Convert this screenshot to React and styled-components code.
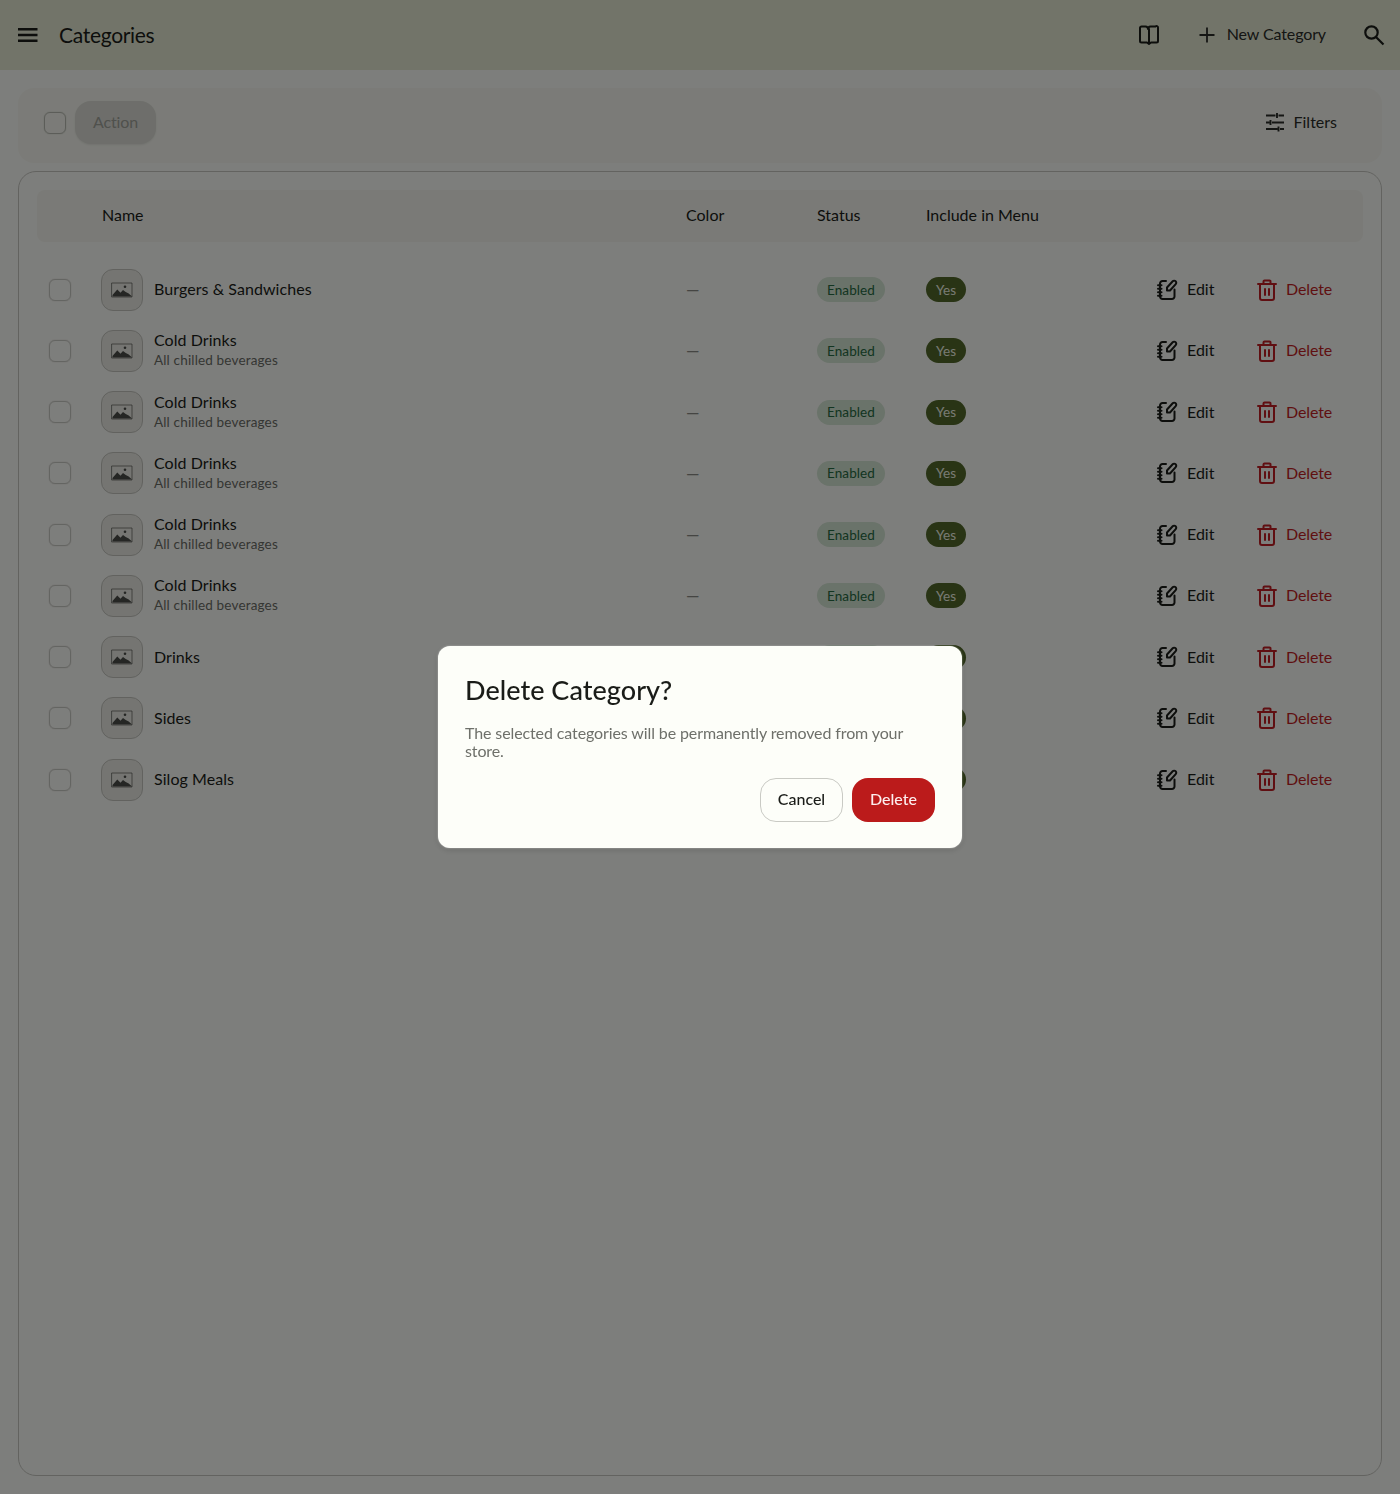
import React from "react";
import styled, { createGlobalStyle } from "styled-components";

const Global = createGlobalStyle`
  html, body { margin: 0; padding: 0; background: #fbfcf8; }
  * { box-sizing: border-box; }
  body { font-family: "Lato", "Noto Sans", sans-serif; color: #1a1c18; }
`;
const Page = styled.div`
  height: 1494px;
  display: flex;
  flex-direction: column;
  background: #fbfcf8;
`;
const AppBar = styled.header`
  height: 70px;
  flex: none;
  display: flex;
  align-items: center;
  padding: 0 14px 0 16px;
  background: #e4e9d3;
`;
const BarIcon = styled.svg`
  display: block;
  flex: none;
  fill: none;
  stroke: currentColor;
  stroke-linecap: round;
  stroke-linejoin: round;
`;
const Title = styled.h1`
  margin: 0 0 2px 19px;
  font-size: 21px;
  font-weight: 400;
  letter-spacing: -0.3px;
  flex: 1;
`;
const BookWrap = styled.div`
  margin-right: 35px;
`;
const Label = styled.span`
  display: block;
  margin-bottom: ${p => p.$lift || 2}px;
`;
const NewButton = styled.div`
  display: flex;
  align-items: center;
  gap: 8px;
  font-size: 16px;
  letter-spacing: -0.12px;
  margin-right: 36px;
  color: #2a2c28;
`;
const Content = styled.main`
  flex: 1;
  display: flex;
  flex-direction: column;
  padding: 18px;
  gap: 8px;
`;
const Toolbar = styled.section`
  height: 75px;
  flex: none;
  display: flex;
  align-items: center;
  padding: 0 45px 6px 26px;
  border-radius: 16px;
  background: #f6f7f0;
`;
const Check = styled.span`
  display: block;
  flex: none;
  width: 22px;
  height: 22px;
  border-radius: 6px;
  border: 1.5px solid ${p => (p.$faint ? "#b9bbb2" : "#c9cac4")};
  background: transparent;
  box-shadow: 0 0 1px rgba(0, 0, 0, 0.3);
`;
const ActionButton = styled.div`
  margin-left: 9px;
  height: 43px;
  width: 81px;
  border-radius: 16px;
  background: #dcddd6;
  color: #a0a29a;
  display: flex;
  align-items: center;
  justify-content: center;
  font-size: 16px;
  letter-spacing: -0.1px;
  box-shadow: 0 1px 2px rgba(0, 0, 0, 0.08);
`;
const Spacer = styled.div`
  flex: 1;
`;
const Filters = styled.div`
  display: flex;
  align-items: center;
  gap: 7px;
  font-size: 16px;
  color: #2a2c28;
`;
const TableCard = styled.section`
  flex: 1;
  border: 1.5px solid #c6c7c1;
  border-radius: 18px;
  padding: 18px;
`;
const columns = `64px 585px 131px 109px 229px 100px 1fr`;
const HeadRow = styled.div`
  height: 52px;
  display: grid;
  grid-template-columns: ${columns};
  align-items: center;
  border-radius: 8px;
  background: #f4f5ee;
  font-size: 16px;
  margin-bottom: 17px;
`;
const HeadCell = styled.span`
  display: block;
  margin-bottom: 3px;
  padding-left: ${p => (p.$inset ? 1 : 0)}px;
`;
const Row = styled.div`
  height: 61.25px;
  display: grid;
  grid-template-columns: ${columns};
  align-items: center;
`;
const CheckCell = styled.div`
  padding-left: 12px;
`;
const NameCell = styled.div`
  display: flex;
  align-items: center;
  gap: 11px;
`;
const Thumb = styled.div`
  width: 42px;
  height: 42px;
  border-radius: 12px;
  background: #eaebe4;
  border: 1px solid #c4c5bf;
  display: flex;
  align-items: center;
  justify-content: center;
  flex: none;
  color: #4a4c48;
`;
const NameText = styled.div`
  display: flex;
  flex-direction: column;
  margin-bottom: 1px;
`;
const Name = styled.div`
  font-size: 16px;
  line-height: 20px;
  letter-spacing: 0.06px;
`;
const Sub = styled.div`
  font-size: 13.5px;
  line-height: 20px;
  letter-spacing: 0.16px;
  color: #6a6c66;
`;
const Dash = styled.div`
  color: #8a8b86;
  font-size: 17px;
`;
const Pill = styled.span`
  display: inline-flex;
  align-items: center;
  height: 25px;
  padding: 0 10px;
  border-radius: 13px;
  font-size: 13.5px;
  letter-spacing: 0.1px;
  background: ${p => (p.$dark ? "#52692a" : "#d4e6d4")};
  color: ${p => (p.$dark ? "#f2f6e8" : "#266a42")};
`;
const Action = styled.div`
  display: flex;
  align-items: center;
  gap: ${p => (p.$danger ? 7 : 8)}px;
  font-size: 16px;
  letter-spacing: ${p => (p.$danger ? -0.1 : 0)}px;
  color: ${p => (p.$danger ? "#c01f24" : "#1a1c18")};
`;
const Scrim = styled.div`
  position: fixed;
  inset: 0;
  background: rgba(0, 0, 0, 0.5);
  display: flex;
  align-items: center;
  justify-content: center;
`;
const Dialog = styled.div`
  width: 524px;
  height: 202px;
  background: #fdfef9;
  border-radius: 12px;
  padding: 27px;
  display: flex;
  flex-direction: column;
  box-shadow: 0 0 2px rgba(255, 255, 255, 0.5), 0 2px 6px rgba(0, 0, 0, 0.15);
`;
const DialogTitle = styled.h2`
  margin: 0;
  font-size: 27px;
  line-height: 34px;
  font-weight: 500;
  letter-spacing: 0.04px;
  color: #1a1c18;
`;
const DialogBody = styled.p`
  margin: 17px 0 0;
  font-size: 16px;
  line-height: 18px;
  letter-spacing: -0.11px;
  color: #6e706a;
`;
const DialogActions = styled.div`
  display: flex;
  justify-content: flex-end;
  gap: 9px;
  margin-top: 18px;
`;
const DialogButton = styled.div`
  width: 83px;
  height: 44px;
  border-radius: 16px;
  display: flex;
  align-items: center;
  justify-content: center;
  font-size: 16px;
  font-weight: 500;
  background: ${p => (p.$primary ? "#bb1b1b" : "transparent")};
  color: ${p => (p.$primary ? "#fdeeee" : "#1a1c18")};
  border: ${p => (p.$primary ? "none" : "1px solid #c9cac4")};
`;

const Menu = () => (
  <BarIcon width="24" height="24" viewBox="0 0 24 24" strokeWidth="2.4">
    <path strokeLinecap="butt" d="M2 6.200h19.500M2 12h19.500M2 17.800h19.500" />
  </BarIcon>
);
const Book = () => (
  <BarIcon width="24" height="24" viewBox="0 0 24 24" strokeWidth="2">
    <path d="M5.500 3.500H9.500A2.500 2.500 0 0 1 12 6a2.500 2.500 0 0 1 2.500-2.500h5A1.500 1.500 0 0 1 22 5v13a1.500 1.500 0 0 1-1.500 1.500H15L13 21l-2-1.500H5.500A1.500 1.500 0 0 1 4 18V5a1.500 1.500 0 0 1 1.500-1.500z" />
    <path d="M13 6v14" />
  </BarIcon>
);
const Plus = () => (
  <BarIcon width="24" height="24" viewBox="0 0 24 24" strokeWidth="1.8">
    <path strokeLinecap="butt" d="M12 4.500v15M4.500 12h15" />
  </BarIcon>
);
const Search = () => (
  <BarIcon width="24" height="24" viewBox="0 0 24 24" strokeWidth="2.2">
    <circle cx="9.500" cy="9.500" r="6.200" />
    <path strokeLinecap="butt" d="M14 14l7.500 7.500" />
  </BarIcon>
);
const Sliders = () => (
  <BarIcon width="24" height="24" viewBox="0 0 24 24" strokeWidth="1.9">
    <path strokeLinecap="butt" d="M3 4.500h9.500M14 2v5M15.500 4.500H21M3 11.500h3.500M7.500 9v5M9 11.500h12M3 18h11.500M15.500 15.500v5M17 18h4" />
  </BarIcon>
);
const Picture = () => (
  <BarIcon width="24" height="24" viewBox="0 0 24 24" strokeWidth="1">
    <rect x="2" y="5" width="20" height="14" strokeOpacity="0.65" />
    <path fill="currentColor" stroke="none" d="M2.500 18.500v-1.500l4.800-5.500 3.200 3.200 2.500-2.700 2.700 2 3 1.500 3.300 3z" />
    <circle cx="15" cy="8.800" r="1.300" fill="currentColor" stroke="none" />
  </BarIcon>
);
const Notebook = () => (
  <BarIcon width="24" height="24" viewBox="0 0 24 24" strokeWidth="2">
    <path d="M11 3H7.500A2.500 2.500 0 0 0 5 5.500v13A2.500 2.500 0 0 0 7.500 21h9.500a2.500 2.500 0 0 0 2.500-2.500V11.500" />
    <path d="M3 7.200h3.500M3 10.700h3.500M3 14.200h3.500M3 17.700h3.500" />
    <path d="M12 12.500V9.500l5.700-6.200a1.900 1.900 0 0 1 3 2.800L15 12.500z" />
  </BarIcon>
);
const Trash = () => (
  <BarIcon width="24" height="24" viewBox="0 0 24 24" strokeWidth="2">
    <path d="M3 6h18M8.500 5.500V3.500a1 1 0 0 1 1-1h5a1 1 0 0 1 1 1v2" />
    <path d="M5 6.500V20a2 2 0 0 0 2 2h10a2 2 0 0 0 2-2V6.500" />
    <path d="M10 11v6M14 11v6" />
  </BarIcon>
);

const rows = [
  { name: "Burgers & Sandwiches" },
  { name: "Cold Drinks", sub: "All chilled beverages" },
  { name: "Cold Drinks", sub: "All chilled beverages" },
  { name: "Cold Drinks", sub: "All chilled beverages" },
  { name: "Cold Drinks", sub: "All chilled beverages" },
  { name: "Cold Drinks", sub: "All chilled beverages" },
  { name: "Drinks" },
  { name: "Sides" },
  { name: "Silog Meals" },
];

export default function App() {
  return (
    <Page>
      <Global />
      <AppBar>
        <Menu />
        <Title>Categories</Title>
        <BookWrap>
          <Book />
        </BookWrap>
        <NewButton>
          <Plus />
          <Label $lift={3}>New Category</Label>
        </NewButton>
        <Search />
      </AppBar>
      <Content>
        <Toolbar>
          <Check $faint />
          <ActionButton>
            <Label>Action</Label>
          </ActionButton>
          <Spacer />
          <Filters>
            <Sliders />
            <Label>Filters</Label>
          </Filters>
        </Toolbar>
        <TableCard>
          <HeadRow>
            <span />
            <HeadCell $inset>Name</HeadCell>
            <HeadCell>Color</HeadCell>
            <HeadCell>Status</HeadCell>
            <HeadCell>Include in Menu</HeadCell>
          </HeadRow>
          {rows.map((r, i) => (
            <Row key={i}>
              <CheckCell>
                <Check />
              </CheckCell>
              <NameCell>
                <Thumb>
                  <Picture />
                </Thumb>
                <NameText>
                  <Name>{r.name}</Name>
                  {r.sub && <Sub>{r.sub}</Sub>}
                </NameText>
              </NameCell>
              <Dash>—</Dash>
              <div>
                <Pill>Enabled</Pill>
              </div>
              <div>
                <Pill $dark>Yes</Pill>
              </div>
              <Action>
                <Notebook />
                <Label>Edit</Label>
              </Action>
              <Action $danger>
                <Trash />
                <Label>Delete</Label>
              </Action>
            </Row>
          ))}
        </TableCard>
      </Content>
      <Scrim>
        <Dialog>
          <DialogTitle>Delete Category?</DialogTitle>
          <DialogBody>
            The selected categories will be permanently removed from your store.
          </DialogBody>
          <DialogActions>
            <DialogButton>
              <Label $lift={3}>Cancel</Label>
            </DialogButton>
            <DialogButton $primary>
              <Label $lift={3}>Delete</Label>
            </DialogButton>
          </DialogActions>
        </Dialog>
      </Scrim>
    </Page>
  );
}
